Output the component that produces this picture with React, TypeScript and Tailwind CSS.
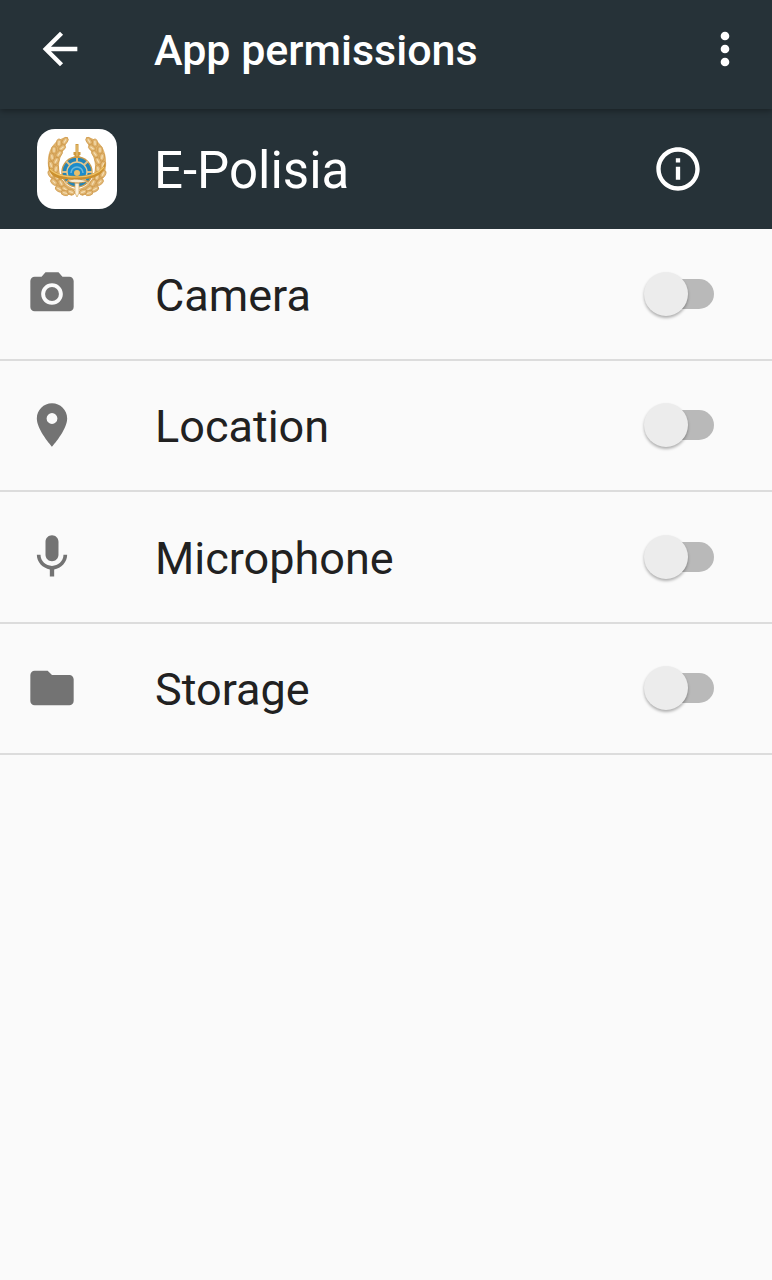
import { useState } from "react";
import type { IconType } from "react-icons";
import { MdArrowBack, MdCameraAlt, MdFolder, MdInfoOutline, MdMic, MdMoreVert, MdPlace } from "react-icons/md";

type Permission = {
  id: string;
  label: string;
  Icon: IconType;
};

const permissions: Permission[] = [
  { id: "camera", label: "Camera", Icon: MdCameraAlt },
  { id: "location", label: "Location", Icon: MdPlace },
  { id: "microphone", label: "Microphone", Icon: MdMic },
  { id: "storage", label: "Storage", Icon: MdFolder },
];

// left half of the wreath: x, y, angle
const leaves = [
  [28, 12, 35],
  [22, 14, 5],
  [25, 19, 50],
  [17, 21, 0],
  [22, 25, 40],
  [15, 28, -10],
  [19, 32, 30],
  [14, 36, -15],
  [19, 40, 10],
  [14, 45, -25],
  [20, 48, -10],
  [17, 53, -45],
  [24, 54, -30],
  [22, 60, -60],
  [28, 60, -50],
  [28, 64, -75],
  [34, 63, -70],
];

const WreathHalf = () => (
  <>
    <path d="M31 8C18 9 10 21 11 35c0 14 8 27 24 32l3-7C26 56 22 47 22 37c0-10 7-18 9-29z" fill="#dfb26b" />
    {leaves.map(([x, y, angle]) => (
      <g key={`${x}-${y}`} transform={`translate(${x} ${y}) rotate(${angle})`}>
        <ellipse rx="2.6" ry="4" fill="#e2b875" stroke="#cc9648" strokeWidth="0.7" />
        <path d="M0-2V2" stroke="#f5dfb5" strokeWidth="1.2" />
      </g>
    ))}
  </>
);

const AppLogo = () => (
  <svg viewBox="0 0 80 80" className="size-20 shrink-0" role="img" aria-label="E-Polisia logo">
    <rect width="80" height="80" rx="18" fill="#fff" />
    <WreathHalf />
    <g transform="translate(80 0) scale(-1 1)">
      <WreathHalf />
    </g>
    <circle cx="40" cy="43" r="15" fill="#2385b8" stroke="#c99a4c" strokeWidth="1.4" />
    <path d="M40 28v30M25 43h30M29 32l22 22M51 32L29 54" stroke="#dcc08a" strokeWidth="2" />
    <circle cx="40" cy="43" r="10" fill="#1b8ccb" stroke="#e3c891" strokeWidth="1.4" />
    <path d="M34 44a6 6 0 0 1 12 0" fill="none" stroke="#6bb7d8" strokeWidth="1.6" />
    <circle cx="40" cy="44" r="3" fill="#e8bf6a" />
    <path d="M38.500 15h3v8h2v3h-1v3h-5v-3h-1v-3h2z" fill="#cf9a3f" />
    <path d="M40 16v11" stroke="#f3d593" strokeWidth="0.8" />
    <path d="M38 54h4v10l-2 4-2-4z" fill="#fbf2df" stroke="#d3a75d" strokeWidth="0.7" />
    {/* ribbon */}
    <path d="M12 37c3 7 14 10 28 10s25-5 28-13c1 7-5 13-13 15-9 2-21 2-30 1-8-1-14-6-13-13z" fill="#cb902e" />
    <path d="M13 40c5 6 15 8 27 8 12 0 22-4 27-10" fill="none" stroke="#edc36b" strokeWidth="1.2" />
    <path d="M30 52c6-3 14-2 21 0-4 2-14 3-21 0z" fill="#f8ead0" stroke="#bd8432" strokeWidth="0.8" />
  </svg>
);

const PermissionRow = ({ id, label, Icon }: Permission) => {
  const [granted, setGranted] = useState(false);

  return (
    <li className="flex items-center border-b-2 border-[#dcdcdc] pl-[26px] pr-[58px]">
      <Icon className="mr-[77px] size-[52px] shrink-0 text-[#737373]" aria-hidden="true" />
      <label htmlFor={id} className="flex-1 pt-1 text-[45px] leading-[52px] text-[#212121]">
        {label}
      </label>
      <input
        id={id}
        type="checkbox"
        role="switch"
        checked={granted}
        onChange={(e) => setGranted(e.target.checked)}
        className="relative flex h-11 w-[70px] shrink-0 cursor-pointer appearance-none items-center before:ml-2 before:h-[30px] before:flex-1 before:rounded-full before:bg-[#b9b9b9] after:absolute after:left-0 after:top-0 after:size-11 after:rounded-full after:bg-[#ececec] after:shadow-[0_2px_3px_rgba(0,0,0,0.3)] checked:before:bg-teal-200 checked:after:left-[26px] checked:after:bg-teal-600"
      />
    </li>
  );
};

const App = () => {
  return (
    <div className="min-h-screen bg-[#fafafa] font-[Roboto,sans-serif]">
      <header className="relative flex min-h-[109px] items-center bg-[#263238] pb-[11px] pl-[34px] pr-[21px] text-white shadow-[0_2px_6px_rgba(0,0,0,0.35)]">
        <button type="button" aria-label="Back" className="mr-[68px] shrink-0">
          <MdArrowBack className="size-[52px]" />
        </button>
        <h1 className="flex-1 pt-0.5 text-[43px] font-medium leading-[52px]">App permissions</h1>
        <button type="button" aria-label="More options" className="shrink-0">
          <MdMoreVert className="size-[52px]" />
        </button>
      </header>

      <main>
        <section className="flex min-h-[120px] items-center bg-[#263238] pl-[37px] pr-[68px] text-white">
          <AppLogo />
          <h2 className="ml-[37px] flex-1 pt-1 text-[51px] leading-[60px]">E-Polisia</h2>
          <button type="button" aria-label="App info" className="shrink-0">
            <MdInfoOutline className="size-[52px]" />
          </button>
        </section>

        <ul className="grid min-h-[526px] auto-rows-fr">
          {permissions.map((permission) => (
            <PermissionRow key={permission.id} {...permission} />
          ))}
        </ul>
      </main>
    </div>
  );
};

export default App;
